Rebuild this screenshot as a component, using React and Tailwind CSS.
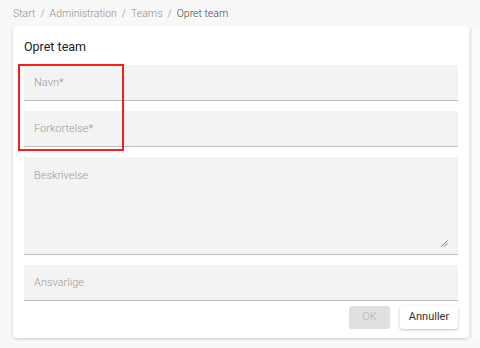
import React from "react";

const Field = ({ label, tall }) => (
  <div
    className={`bg-[#f3f3f3] border-b border-[#bdbdbd] rounded-t-[2px] px-[10px] text-[11px] font-light text-[#9a9a9a] ${
      tall ? "relative h-[98px] pt-[11px]" : "h-[36px] flex items-center pt-[2px]"
    }`}
  >
    {label}
    {tall && (
      <svg
        className="absolute right-[10px] bottom-[7px]"
        width="7"
        height="7"
        viewBox="0 0 7 7"
      >
        <path d="M6.5 0.5 L0.5 6.5 M6.5 3.5 L3.5 6.5" stroke="#777" strokeWidth="1" />
      </svg>
    )}
  </div>
);

const Sep = () => <span className="mx-[5px]">/</span>;

const App = () => {
  return (
    <div className="min-h-screen bg-[#f8f8f8] font-['Roboto',sans-serif]">
      <div className="h-[26px] pl-[13px] pt-[6px] text-[10.5px] font-light text-[#8e8e8e]">
        Start<Sep />Administration<Sep />Teams<Sep />
        <span className="text-[#444]">Opret team</span>
      </div>
      <div className="flex">
        <div className="relative ml-[13px] w-[456px] bg-white rounded-[4px] shadow-[0_1px_3px_rgba(0,0,0,0.18)] px-[11px] pb-[5px]">
          <div className="h-[39px] flex items-center pt-[3px] text-[12.5px] text-[#222]">
            Opret team
          </div>
          <div className="flex flex-col gap-[10px]">
            <Field label="Navn*" />
            <Field label="Forkortelse*" />
            <Field label="Beskrivelse" tall />
            <Field label="Ansvarlige" />
          </div>
          <div className="flex justify-end gap-[10px] mt-[5px]">
            <button className="w-[41px] h-[23px] rounded-[3px] bg-[#e0e0e0] text-[11px] font-light text-[#b4b4b4]">
              OK
            </button>
            <button className="w-[58px] h-[23px] rounded-[3px] bg-white text-[11px] text-[#333] shadow-[0_1px_3px_rgba(0,0,0,0.25)]">
              Annuller
            </button>
          </div>
          <div className="absolute left-[5px] top-[38px] w-[106px] h-[87px] border-2 border-[#ff1a1a] pointer-events-none" />
        </div>
        <div className="ml-[2px] mt-[2px] flex-1 h-[310px] bg-[#fcfcfc] border-l border-[#ececec]" />
      </div>
    </div>
  );
};

export default App;
